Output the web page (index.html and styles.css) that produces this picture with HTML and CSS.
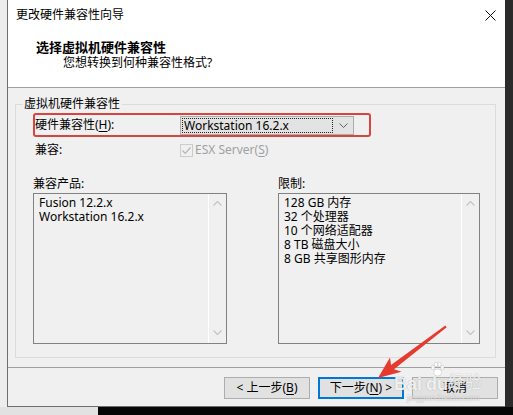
FILE: index.html
```html
<!DOCTYPE html>
<html lang="zh-CN">
<head>
<meta charset="utf-8">
<title>更改硬件兼容性向导</title>
<link rel="stylesheet" href="styles.css">
</head>
<body>
<div class="screen">
  <div class="edge-left"></div>
  <div class="window">
    <div class="titlebar">
      <span class="title">更改硬件兼容性向导</span>
      <span class="close">
        <svg width="11" height="11" viewBox="0 0 11 11"><path d="M0.5 0.5 L10.5 10.5 M10.5 0.5 L0.5 10.5" stroke="#111" stroke-width="1" fill="none"/></svg>
      </span>
    </div>
    <div class="header">
      <div class="h-title">选择虚拟机硬件兼容性</div>
      <div class="h-sub">您想转换到何种兼容性格式?</div>
    </div>
    <div class="content">
      <fieldset class="group">
        <legend class="legend">虚拟机硬件兼容性</legend>
        <div class="row row-hl">
          <span class="row-label">硬件兼容性(<u>H</u>):</span>
          <div class="combo">
            <span class="combo-text">Workstation 16.2.x</span>
            <span class="combo-arrow">
              <svg width="9" height="5" viewBox="0 0 9 5"><path d="M0.5 0.5 L4.5 4.5 L8.5 0.5" stroke="#606060" stroke-width="1" fill="none"/></svg>
            </span>
          </div>
        </div>
        <div class="row">
          <span class="row-label">兼容:</span>
          <div class="check">
            <span class="check-box">
              <svg width="11" height="11" viewBox="0 0 11 11"><path d="M1.5 5.5 L4.2 8.3 L9.5 2.5" stroke="#b5b5b5" stroke-width="1.2" fill="none"/></svg>
            </span>
            <span class="check-text">ESX Server(<u>S</u>)</span>
          </div>
        </div>
        <div class="lists">
          <div class="col">
            <div class="list-label">兼容产品:</div>
            <div class="listbox">
              <div class="items">
                <div class="item">Fusion 12.2.x</div>
                <div class="item">Workstation 16.2.x</div>
              </div>
              <div class="scroll">
                <svg width="9" height="5" viewBox="0 0 9 5"><path d="M0.5 4.5 L4.5 0.5 L8.5 4.5" stroke="#c4c4c4" stroke-width="1.2" fill="none"/></svg>
                <svg width="9" height="5" viewBox="0 0 9 5"><path d="M0.5 0.5 L4.5 4.5 L8.5 0.5" stroke="#c4c4c4" stroke-width="1.2" fill="none"/></svg>
              </div>
            </div>
          </div>
          <div class="col">
            <div class="list-label">限制:</div>
            <div class="listbox">
              <div class="items">
                <div class="item">128 GB 内存</div>
                <div class="item">32 个处理器</div>
                <div class="item">10 个网络适配器</div>
                <div class="item">8 TB 磁盘大小</div>
                <div class="item">8 GB 共享图形内存</div>
              </div>
              <div class="scroll">
                <svg width="9" height="5" viewBox="0 0 9 5"><path d="M0.5 4.5 L4.5 0.5 L8.5 4.5" stroke="#c4c4c4" stroke-width="1.2" fill="none"/></svg>
                <svg width="9" height="5" viewBox="0 0 9 5"><path d="M0.5 0.5 L4.5 4.5 L8.5 0.5" stroke="#c4c4c4" stroke-width="1.2" fill="none"/></svg>
              </div>
            </div>
          </div>
        </div>
      </fieldset>
    </div>
    <div class="footer">
      <button class="btn">&lt; 上一步(<u>B</u>)</button>
      <button class="btn btn-default">下一步(<u>N</u>) &gt;</button>
      <button class="btn">取消</button>
    </div>
  </div>
  <div class="edge-right"></div>
  <div class="bottom">
    <div class="bottom-light"></div>
    <div class="bottom-dark"></div>
  </div>
</div>

<div class="watermark">
  <span class="wm-bai">Bai</span>
  <svg class="wm-paw" width="15" height="15" viewBox="0 0 15 15">
    <g fill="rgba(255,255,255,0.85)" stroke="rgba(150,150,150,0.5)" stroke-width="0.6">
      <ellipse cx="3" cy="5.5" rx="1.8" ry="2.2"/>
      <ellipse cx="6" cy="2.5" rx="1.8" ry="2.2"/>
      <ellipse cx="9.5" cy="2.5" rx="1.8" ry="2.2"/>
      <ellipse cx="12.3" cy="5.5" rx="1.8" ry="2.2"/>
      <ellipse cx="7.7" cy="10.5" rx="4" ry="3.5"/>
    </g>
  </svg>
  <span class="wm-du">du</span>
  <span class="wm-jy">经验</span>
  <span class="wm-url">jingyan.baidu.com</span>
</div>

<svg class="arrow" width="513" height="415" viewBox="0 0 513 415">
  <polygon points="378,378 390,357.5 391,365 445.3,325.5 446.7,327.3 394,369.2 401.5,371.8" fill="#e63a2e"/>
</svg>
</body>
</html>
```

FILE: styles.css
```css
* { box-sizing: border-box; }
html, body { margin: 0; padding: 0; }
body {
  width: 513px;
  height: 415px;
  overflow: hidden;
  position: relative;
  background: #2a2a2a;
  font-family: "Noto Sans", "Noto Sans CJK SC", sans-serif;
  font-size: 12px;
  color: #000;
}
u { text-decoration: underline; text-underline-offset: 2px; }

.screen {
  display: grid;
  grid-template-columns: 7px 498px 8px;
  grid-template-rows: 407px 8px;
}
.edge-left { background: #ededed; }
.edge-right { background: #2b2b2b; }
.bottom {
  grid-column: 1 / 4;
  display: grid;
  grid-template-columns: 98px 1fr;
}
.bottom-light { background: #e2e2e2; }
.bottom-dark { background: #060606; }

.window {
  background: #f0f0f0;
  border-left: 1px solid #6e6e6e;
  border-bottom: 1px solid #6e6e6e;
  display: flex;
  flex-direction: column;
}

.titlebar {
  height: 31px;
  background: #fff;
  display: flex;
  align-items: center;
  justify-content: space-between;
  padding: 0 9px 1px 8px;
}
.title { line-height: 16px; }
.close { display: flex; width: 11px; height: 11px; }

.header {
  height: 57px;
  background: #fff;
  border-bottom: 1px solid #a0a0a0;
  padding: 8px 0 0 28px;
}
.h-title {
  font-family: "Noto Sans CJK SC", sans-serif;
  font-weight: bold;
  font-size: 13px;
  line-height: 16px;
}
.h-sub {
  line-height: 16px;
  padding-left: 27px;
}

.content {
  height: 280px;
  border-bottom: 1px solid #a0a0a0;
  padding: 8px 9px 0 7px;
}
.group {
  margin: 0;
  border: 1px solid #dcdcdc;
  padding: 0 15px 0 17px;
  height: 262px;
  min-inline-size: 0;
}
.legend {
  padding: 0 2px 0 1px;
  margin-left: -10px;
  line-height: 16px;
}

.row {
  display: flex;
  align-items: center;
  height: 20px;
}
.row-label {
  width: 147px;
  flex: none;
  line-height: 16px;
  padding-left: 2px;
}
.row-hl {
  width: 338px;
  height: 24px;
  margin-top: 1px;
  margin-bottom: 3px;
  border: 2px solid #d8453e;
  border-radius: 3px;
}
.row-hl .row-label { width: 145px; padding-left: 0; }

.combo {
  width: 174px;
  height: 19px;
  background: #e3e3e3;
  border: 1px solid #adadad;
  display: flex;
  align-items: center;
  padding: 0 0 0 1px;
}
.combo-text {
  flex: 1;
  height: 15px;
  line-height: 13px;
  border: 1px dotted #222;
  padding-left: 1px;
}
.combo-arrow {
  width: 20px;
  display: flex;
  justify-content: center;
}

.check {
  display: flex;
  align-items: center;
  gap: 2px;
  color: #a0a0a0;
}
.check-box {
  width: 13px;
  height: 13px;
  border: 1px solid #cccccc;
  background: #f0f0f0;
  display: flex;
  align-items: center;
  justify-content: center;
}
.check-text { line-height: 16px; }

.lists {
  display: grid;
  grid-template-columns: 194px 202px;
  column-gap: 51px;
  margin-top: 16px;
}
.list-label {
  line-height: 16px;
  height: 17px;
}
.listbox {
  height: 151px;
  border: 1px solid #828282;
  background: #f0f0f0;
  display: flex;
}
.items {
  flex: 1;
  padding: 2px 0 0 5px;
}
.item {
  height: 14px;
  line-height: 14px;
}
.scroll {
  width: 18px;
  border-left: 1px solid #ffffff;
  display: flex;
  flex-direction: column;
  justify-content: space-between;
  align-items: center;
  padding: 7px 0 8px;
}

.footer {
  flex: 1;
  display: flex;
  justify-content: flex-end;
  align-items: flex-start;
  gap: 8px;
  padding: 9px 7px 0 0;
}
.btn {
  width: 86px;
  height: 22px;
  margin: 0;
  padding: 0;
  background: #e1e1e1;
  border: 1px solid #adadad;
  font-family: "Noto Sans", "Noto Sans CJK SC", sans-serif;
  font-size: 12px;
  line-height: 18px;
  color: #000;
}
.btn-default {
  border: 1px solid #0078d7;
  box-shadow: inset 0 0 0 1px #0078d7;
}

.watermark {
  position: absolute;
  left: 393px;
  top: 360px;
  width: 112px;
  height: 46px;
  color: rgba(255, 255, 255, 0.85);
  text-shadow: 0 0 1px rgba(100, 100, 100, 0.55);
  font-family: "Liberation Sans", sans-serif;
  pointer-events: none;
}
.wm-bai, .wm-du {
  position: absolute;
  top: 15px;
  font-size: 18px;
  line-height: 18px;
  font-weight: bold;
}
.wm-bai { left: 1px; }
.wm-du { left: 33px; }
.wm-paw {
  position: absolute;
  left: 37px;
  top: 2px;
}
.wm-jy {
  position: absolute;
  left: 55px;
  top: 12px;
  font-family: "Noto Sans CJK SC", sans-serif;
  font-size: 17px;
  line-height: 17px;
}
.wm-url {
  position: absolute;
  left: 14px;
  top: 34px;
  font-size: 9px;
  line-height: 9px;
  color: rgba(255, 255, 255, 0.7);
}

.arrow {
  position: absolute;
  left: 0;
  top: 0;
  pointer-events: none;
}
```
